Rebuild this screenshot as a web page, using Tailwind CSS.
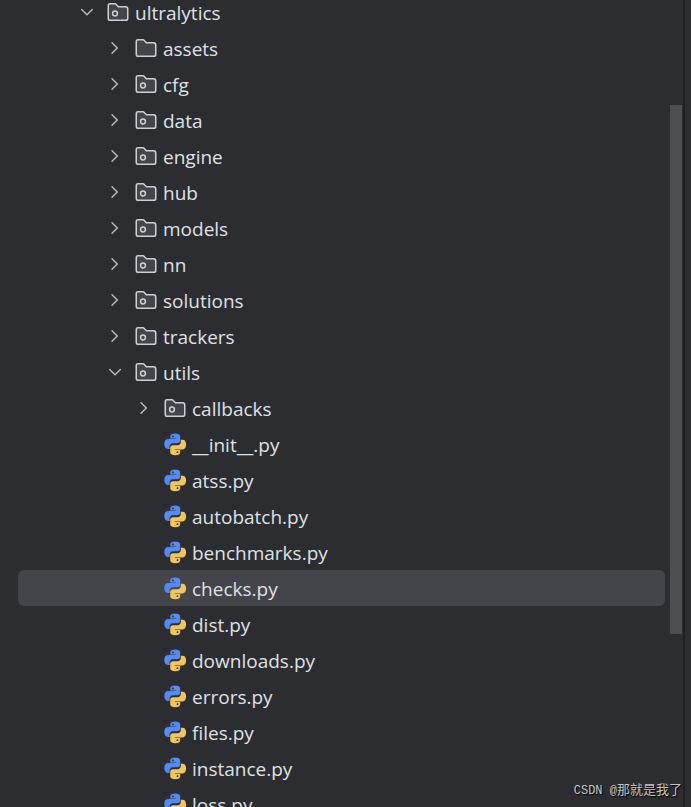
<!DOCTYPE html>
<html lang="en">
<head>
<meta charset="utf-8">
<meta name="viewport" content="width=device-width, initial-scale=1">
<title>Project</title>
<script src="https://cdn.jsdelivr.net/npm/@tailwindcss/browser@4"></script>
</head>
<body class="bg-[#2b2d30] font-['Open_Sans','Noto_Sans',sans-serif] text-[#dfe1e5]">
<svg class="hidden" aria-hidden="true">
  <symbol id="folder" viewBox="0 0 16 16">
    <path d="M8.106 4.346L8.253 4.5H13C13.828 4.5 14.5 5.172 14.5 6V12.133C14.5 12.953 13.932 13.5 13.367 13.5H2.633C2.068 13.5 1.5 12.953 1.5 12.133V3.867C1.5 3.047 2.068 2.5 2.633 2.5H6.122C6.258 2.5 6.388 2.556 6.483 2.654L8.106 4.346Z" fill="#43454a" stroke="#ced0d6"/>
  </symbol>
  <symbol id="package" viewBox="0 0 16 16">
    <use href="#folder"/>
    <circle cx="6" cy="9" r="1.6" fill="none" stroke="#ced0d6"/>
  </symbol>
  <symbol id="python" viewBox="0 0 24 24">
    <path fill="#548af7" d="M12.2 1.4C8.8 1.4 7.2 2.6 7.2 4.4V6.5H12.6V7.1H4.8C2.7 7.1 1.3 8.9 1.3 12C1.3 15.1 2.7 16.9 4.6 16.9H6.6V14.5C6.6 12.6 8.1 11.3 9.9 11.3H14.4C16 11.3 17.2 10.1 17.2 8.6V4.4C17.2 2.5 15.2 1.4 12.2 1.4Z"/>
    <path fill="#f2c55c" transform="rotate(180 12.2 12.3)" d="M12.2 1.4C8.8 1.4 7.2 2.6 7.2 4.4V6.5H12.6V7.1H4.8C2.7 7.1 1.3 8.9 1.3 12C1.3 15.1 2.7 16.9 4.6 16.9H6.6V14.5C6.6 12.6 8.1 11.3 9.9 11.3H14.4C16 11.3 17.2 10.1 17.2 8.6V4.4C17.2 2.5 15.2 1.4 12.2 1.4Z"/>
    <circle cx="9.9" cy="4.4" r=".9" fill="#2b2d30"/>
    <circle cx="14.5" cy="20.2" r=".9" fill="#2b2d30"/>
  </symbol>
  <symbol id="open" viewBox="0 0 24 24"><path d="M6.7 9.5L12 14.8L17.3 9.5" fill="none" stroke="#b4b8bf" stroke-width="1.5" stroke-linecap="round"/></symbol>
  <symbol id="closed" viewBox="0 0 24 24"><path d="M9 6.7L14.3 12L9 17.3" fill="none" stroke="#b4b8bf" stroke-width="1.5" stroke-linecap="round"/></symbol>
</svg>
<main class="relative flex h-screen overflow-hidden">
  <nav aria-label="Project files" class="min-w-0 flex-1 pl-[18px] pr-[5px]">
    <ul id="tree" class="-mt-[6px]"></ul>
  </nav>
  <div class="w-[13px] pt-[105px]"><div class="h-[529px] w-3 bg-[#4d4e51]"></div></div>
  <div class="w-2 border-l-2 border-[#1e1f22]"></div>
  <p class="absolute bottom-[6px] right-[9px] flex items-baseline whitespace-pre leading-5 text-[#c4c5c6] [text-shadow:1px_1px_1px_#000]"><span class="font-['Liberation_Mono',monospace] text-[12px]">CSDN @</span><span lang="zh-CN" class="font-['Noto_Sans_CJK_SC',sans-serif] text-[13px]">那就是我了</span></p>
</main>
<script>
const indent = ["pl-[57px]", "pl-[85px]", "pl-[114px]"];
const rows = [
  [0, "open", "package", "ultralytics"],
  [1, "closed", "folder", "assets"],
  ...["cfg", "data", "engine", "hub", "models", "nn", "solutions", "trackers"].map(n => [1, "closed", "package", n]),
  [1, "open", "package", "utils"],
  [2, "closed", "package", "callbacks"],
  ...["__init__", "atss", "autobatch", "benchmarks", "checks", "dist", "downloads", "errors", "files", "instance", "loss"].map(n => [2, "", "python", n + ".py"])
];
document.getElementById("tree").innerHTML = rows.map(([level, chevron, icon, name]) => `
  <li><button type="button" class="flex h-9 w-full items-center rounded-md text-left ${indent[level]} ${name === "checks.py" ? "bg-[#43454a]" : ""}">
    <svg class="mr-[7px] size-6 shrink-0" aria-hidden="true">${chevron ? `<use href="#${chevron}"/>` : ""}</svg>
    <svg class="mr-[5px] size-6 shrink-0" aria-hidden="true"><use href="#${icon}"/></svg>
    <span class="pt-[2px] text-[19px] leading-6">${name}</span>
  </button></li>`).join("");
</script>
</body>
</html>
